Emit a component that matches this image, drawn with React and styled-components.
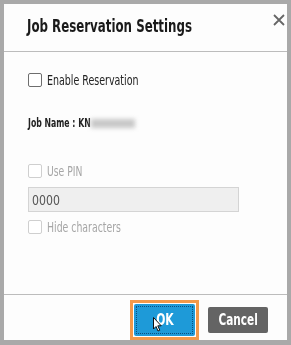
import styled, { createGlobalStyle } from "styled-components";

const GlobalStyle = createGlobalStyle`
  body {
    margin: 0;
    background: #a9a9a9;
    font-family: "DejaVu Sans Condensed", "Liberation Sans", sans-serif;
  }
`;

const Frame = styled.div`
  box-sizing: border-box;
  width: 291px;
  height: 345px;
  padding: 4px 4px 5px 4px;
  background: #a9a9a9;
`;

const Dialog = styled.div`
  display: flex;
  flex-direction: column;
  height: 100%;
  background: #fdfdfd;
`;

// the screenshot uses a very narrow font, squeeze ours to the same width
const Narrow = styled.span`
  display: inline-block;
  white-space: nowrap;
  transform: scaleX(${(p) => p.sx || 0.8});
  transform-origin: ${(p) => (p.center ? "center" : "left")};
`;

const Header = styled.div`
  display: flex;
  justify-content: space-between;
  align-items: flex-start;
  height: 47px;
  padding: 0 0 0 23px;
  border-bottom: 1px solid #bcbcbc;
`;

const Title = styled.h1`
  margin: 11px 0 0;
  font-size: 18px;
  font-weight: 700;
  color: #1a1a1a;
`;

const Close = styled.button`
  margin-top: 8px;
  padding: 0;
  width: 16px;
  height: 16px;
  border: none;
  background: none;
  display: flex;
  align-items: center;
  justify-content: center;
`;

const Body = styled.div`
  flex: 1;
  display: flex;
  flex-direction: column;
  padding: 21px 24px 0;
`;

const CheckRow = styled.label`
  display: flex;
  align-items: center;
  gap: 5px;
  height: 14px;
  font-size: 13.5px;
  color: ${(p) => (p.disabled ? "#a6a6a6" : "#222")};
`;

const Box = styled.span`
  flex: none;
  box-sizing: border-box;
  width: 14px;
  height: 14px;
  border: 1.5px solid ${(p) => (p.disabled ? "#cfcfcf" : "#6e6e6e")};
  border-radius: 2px;
  background: #fff;
`;

const JobName = styled.div`
  display: flex;
  align-items: center;
  height: 14px;
  margin: 29px 0 0;
  font-size: 12px;
  font-weight: 700;
  color: #222;
`;

const Blurred = styled.span`
  display: inline-block;
  width: 44px;
  height: 9px;
  margin-left: -24px;
  background: #c8c8c8;
  filter: blur(2px);
`;

const Spacer = styled.div`
  height: ${(p) => p.h}px;
`;

const PinInput = styled.div`
  box-sizing: border-box;
  width: 211px;
  height: 25px;
  margin: 9px 0 8px;
  padding: 0 3px;
  display: flex;
  align-items: center;
  background: #efefef;
  border: 1px solid #d4d4d4;
  font-size: 14px;
  color: #555;
`;

const Footer = styled.div`
  display: flex;
  justify-content: flex-end;
  align-items: center;
  gap: 9px;
  height: 46px;
  padding: 4px 19px 0 0;
  box-sizing: border-box;
  border-top: 1px solid #bcbcbc;
`;

const FocusRing = styled.span`
  position: relative;
  display: flex;
  padding: 1px;
  border: 3px solid #f2994a;
`;

const Button = styled.button`
  box-sizing: border-box;
  width: ${(p) => p.w}px;
  height: ${(p) => p.h}px;
  padding: 0;
  border: none;
  border-radius: 2px;
  background: ${(p) => p.bg};
  color: #fff;
  font-family: inherit;
  font-size: 15px;
  font-weight: 700;
  outline: ${(p) => (p.focused ? "1px dotted #0a4f80" : "none")};
  outline-offset: -3px;
`;

const Cursor = styled.svg`
  position: absolute;
  left: 20px;
  top: 14px;
`;

const App = () => (
  <>
    <GlobalStyle />
    <Frame>
      <Dialog>
        <Header>
          <Title>
            <Narrow sx={0.73}>Job Reservation Settings</Narrow>
          </Title>
          <Close aria-label="Close">
            <svg width="12" height="12" viewBox="0 0 12 12">
              <path d="M1 1 L11 11 M11 1 L1 11" stroke="#666" strokeWidth="1.8" />
            </svg>
          </Close>
        </Header>
        <Body>
          <CheckRow>
            <Box />
            <Narrow sx={0.78}>Enable Reservation</Narrow>
          </CheckRow>
          <JobName>
            <Narrow sx={0.72}>Job Name : KN</Narrow>
            <Blurred />
          </JobName>
          <Spacer h={34} />
          <CheckRow disabled>
            <Box disabled />
            <Narrow sx={0.76}>Use PIN</Narrow>
          </CheckRow>
          <PinInput>
            <Narrow sx={0.87}>0000</Narrow>
          </PinInput>
          <CheckRow disabled>
            <Box disabled />
            <Narrow sx={0.77}>Hide characters</Narrow>
          </CheckRow>
        </Body>
        <Footer>
          <FocusRing>
            <Button w={61} h={32} bg="#1e9ad8" focused>
              <Narrow sx={0.8} center>OK</Narrow>
            </Button>
            <Cursor width="9" height="15" viewBox="0 0 9 15">
              <path d="M0.5 0.5 L0.5 12 L3 9.5 L5 14 L6.8 13.2 L4.8 8.8 L8.2 8.8 Z" fill="#fff" stroke="#111" strokeWidth="1" />
            </Cursor>
          </FocusRing>
          <Button w={60} h={26} bg="#646464">
            <Narrow sx={0.78} center>Cancel</Narrow>
          </Button>
        </Footer>
      </Dialog>
    </Frame>
  </>
);

export default App;
